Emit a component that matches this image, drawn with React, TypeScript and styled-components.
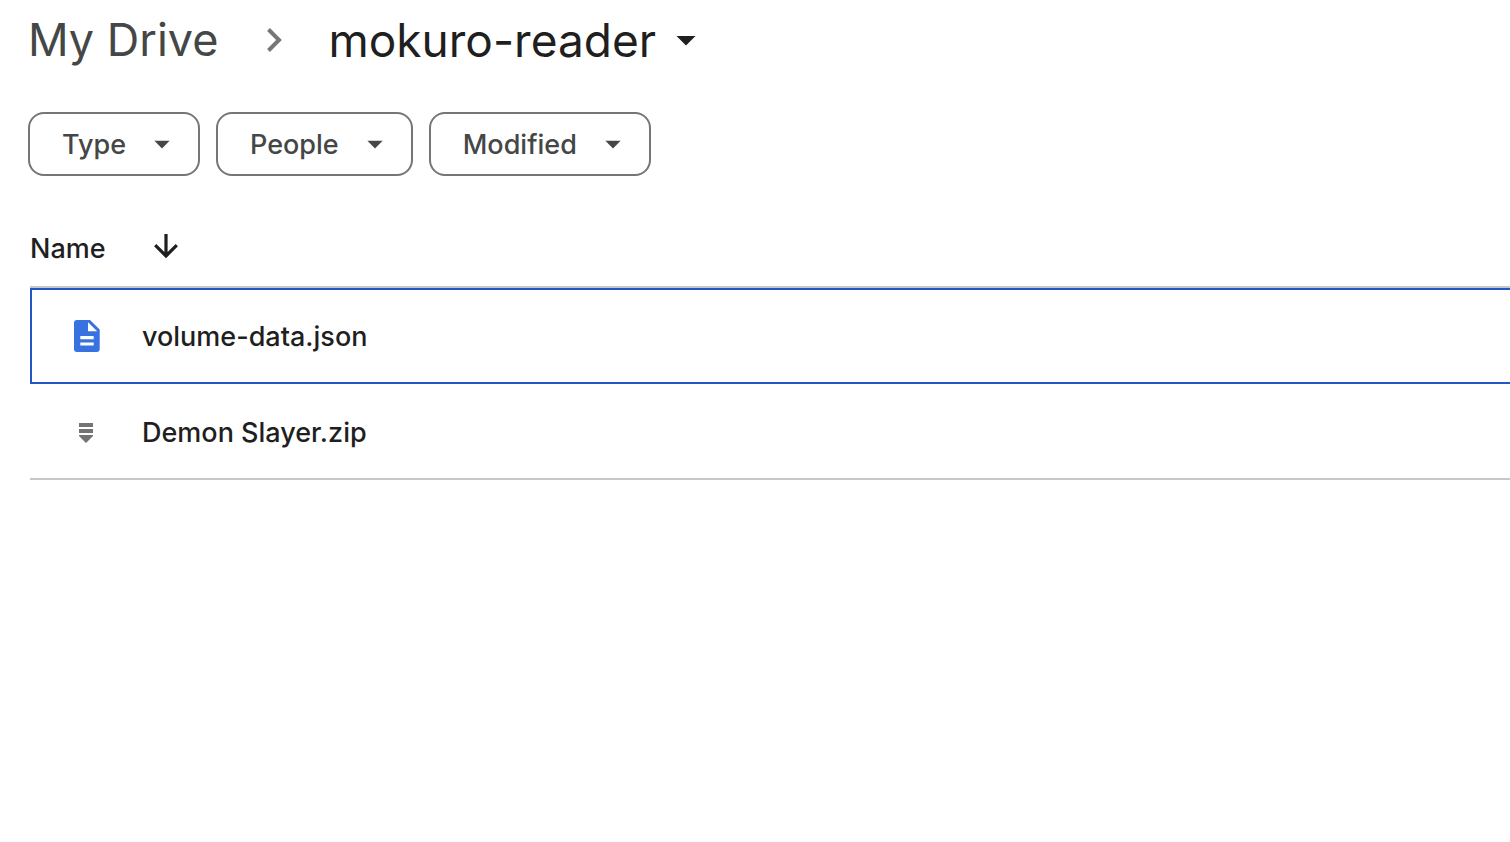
import React from "react";
import styled, { createGlobalStyle } from "styled-components";

const GlobalStyle = createGlobalStyle`
  * { box-sizing: border-box; }
  body {
    margin: 0;
    background: #fff;
    color: #1f1f1f;
    font-family: Inter, Roboto, "Liberation Sans", sans-serif;
    -webkit-font-smoothing: antialiased;
  }
  button { font-family: inherit; cursor: pointer; }
`;

const Page = styled.main`
  padding-left: 28px;
`;

const Breadcrumbs = styled.nav`
  display: flex;
  align-items: center;
  height: 80px;
  font-size: 45px;
  line-height: 56px;
  white-space: nowrap;
`;

const CrumbLink = styled.a`
  color: #444746;
  text-decoration: none;
`;

const Separator = styled.svg`
  width: 16px;
  height: 24px;
  margin: 0 46px 0 48px;
  flex: none;
`;

const CurrentFolder = styled.button`
  display: flex;
  align-items: center;
  gap: 20px;
  padding: 0;
  border: 0;
  background: none;
  color: #1f1f1f;
  font-size: 46px;
  line-height: 56px;
`;

const Caret = styled.svg<{ $width: number }>`
  width: ${({ $width }) => $width}px;
  height: 12px;
  flex: none;
  fill: currentColor;
`;

const Filters = styled.div`
  display: flex;
  gap: 16px;
  margin-top: 32px;
`;

const FilterChip = styled.button`
  display: flex;
  align-items: center;
  gap: 28px;
  height: 64px;
  padding: 0 28px 0 32px;
  border: 2px solid #747775;
  border-radius: 16px;
  background: #fff;
  color: #444746;
  font-size: 27px;
  font-weight: 500;
  line-height: 40px;
`;

const Label = styled.span`
  padding-top: 2px;
`;

const FileTable = styled.table`
  width: calc(100% - 2px);
  margin: 32px 0 0 2px;
  border-collapse: separate;
  border-spacing: 0;
  font-size: 27px;
  line-height: 40px;
`;

const HeaderCell = styled.th`
  height: 80px;
  padding: 0;
  border-bottom: 2px solid #c7c7c7;
  text-align: left;
  font-weight: 500;
`;

const SortButton = styled.button`
  display: flex;
  align-items: center;
  gap: 48px;
  padding: 0;
  border: 0;
  background: none;
  color: #1f1f1f;
  font-size: 27px;
  font-weight: 500;
  line-height: 40px;
`;

const SortLabel = styled.span`
  padding-top: 4px;
`;

const SortArrow = styled.svg`
  width: 24px;
  height: 26px;
  flex: none;
`;

const FileCell = styled.td<{ $selected: boolean }>`
  height: 96px;
  padding: 0 0 0 ${({ $selected }) => ($selected ? 40 : 42)}px;
  border-style: solid;
  border-color: ${({ $selected }) => ($selected ? "#2456c5" : "transparent transparent #c7c7c7")};
  border-width: ${({ $selected }) => ($selected ? "2px 0 2px 2px" : "2px 0")};
  font-weight: 500;
`;

const FileEntry = styled.div`
  display: flex;
  align-items: center;
  gap: 42px;
`;

const FileIcon = styled.svg`
  width: 28px;
  height: 32px;
  flex: none;
`;

const DownCaret = ({ width }: { width: number }) => (
  <Caret $width={width} viewBox="0 0 20 12" aria-hidden="true">
    <path d="M.5 2h19L10 11.600z" />
  </Caret>
);

const DocumentIcon = () => (
  <FileIcon viewBox="0 0 28 32" aria-hidden="true">
    <path
      fill="#3871e0"
      fillRule="evenodd"
      d="M5 0h13l9.700 9.500V29a3 3 0 0 1-3 3H5a3 3 0 0 1-3-3V3a3 3 0 0 1 3-3zM16 2.200v9h9.200zM8.300 16v3.200h13.400V16zM8.300 22.400v3.200h13.400v-3.200z"
    />
  </FileIcon>
);

const ArchiveIcon = () => (
  <FileIcon viewBox="0 0 28 32" aria-hidden="true">
    <path fill="#747474" d="M7 7h14v4H7zM7 13h14v4H7zM7 19h14v1l-7 7-7-7z" />
  </FileIcon>
);

const filters = ["Type", "People", "Modified"];

const files = [
  { name: "volume-data.json", Icon: DocumentIcon, selected: true },
  { name: "Demon Slayer.zip", Icon: ArchiveIcon, selected: false },
];

export default function App() {
  return (
    <>
      <GlobalStyle />
      <Page>
        <Breadcrumbs aria-label="Folder path">
          <CrumbLink href="#my-drive">My Drive</CrumbLink>
          <Separator viewBox="0 0 16 24" aria-hidden="true">
            <path d="M2.500 1.500 13 12 2.500 22.500" fill="none" stroke="#747775" strokeWidth="4" />
          </Separator>
          <CurrentFolder type="button">
            mokuro-reader
            <DownCaret width={20} />
          </CurrentFolder>
        </Breadcrumbs>
        <Filters>
          {filters.map((label) => (
            <FilterChip type="button" key={label}>
              <Label>{label}</Label>
              <DownCaret width={16} />
            </FilterChip>
          ))}
        </Filters>
        <FileTable>
          <thead>
            <tr>
              <HeaderCell scope="col" aria-sort="ascending">
                <SortButton type="button">
                  <SortLabel>Name</SortLabel>
                  <SortArrow viewBox="0 0 24 26" aria-hidden="true">
                    <path d="M12 0v22M1.200 11.200 12 22l10.800-10.800" fill="none" stroke="currentColor" strokeWidth="3.200" />
                  </SortArrow>
                </SortButton>
              </HeaderCell>
            </tr>
          </thead>
          <tbody>
            {files.map(({ name, Icon, selected }) => (
              <tr key={name}>
                <FileCell $selected={selected}>
                  <FileEntry>
                    <Icon />
                    <Label>{name}</Label>
                  </FileEntry>
                </FileCell>
              </tr>
            ))}
          </tbody>
        </FileTable>
      </Page>
    </>
  );
}
